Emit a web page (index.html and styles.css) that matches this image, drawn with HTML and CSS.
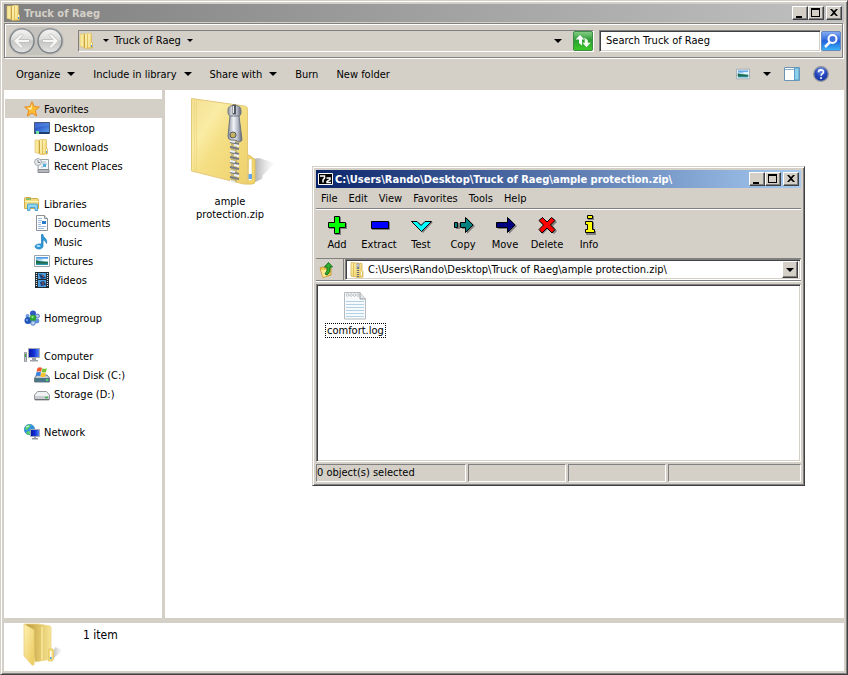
FILE: index.html
```html
<!DOCTYPE html>
<html lang="en">
<head>
<meta charset="utf-8">
<title>Truck of Raeg</title>
<link rel="stylesheet" href="styles.css">
</head>
<body>
<svg class="defs" aria-hidden="true">
  <defs>
    <linearGradient id="gFold" x1="0" x2="1" y1="0" y2="1"><stop offset="0" stop-color="#fdf2b4"/><stop offset="1" stop-color="#ecc95a"/></linearGradient>
    <linearGradient id="gFold2" x1="0" x2="1"><stop offset="0" stop-color="#b9973c"/><stop offset=".5" stop-color="#dcc062"/><stop offset="1" stop-color="#f7e493"/></linearGradient>
    <linearGradient id="gZip" x1="0" x2="1" y1="0" y2="1"><stop offset="0" stop-color="#f3e092"/><stop offset=".3" stop-color="#faeca4"/><stop offset=".5" stop-color="#f5df85"/><stop offset="1" stop-color="#eed06a"/></linearGradient>
    <linearGradient id="gSteel" x1="0" x2="1"><stop offset="0" stop-color="#8a8e96"/><stop offset=".4" stop-color="#f0f3f8"/><stop offset=".7" stop-color="#b4bac6"/><stop offset="1" stop-color="#5c6270"/></linearGradient>
    <linearGradient id="gShade" x1="0" x2="1"><stop offset="0" stop-color="#999" stop-opacity=".85"/><stop offset="1" stop-color="#ccc" stop-opacity="0"/></linearGradient>
    <linearGradient id="gBlue" x1="0" x2="1" y1="0" y2="1"><stop offset="0" stop-color="#1436b8"/><stop offset="1" stop-color="#5fa2ec"/></linearGradient>
    <linearGradient id="gScreen" x1="0" x2="1" y1="0" y2="0"><stop offset="0" stop-color="#0a14a0"/><stop offset=".5" stop-color="#1030d8"/><stop offset="1" stop-color="#5a8cf4"/></linearGradient>
    <linearGradient id="gGreen" x1="0" x2="0" y1="0" y2="1"><stop offset="0" stop-color="#88d088"/><stop offset=".45" stop-color="#2c9c34"/><stop offset="1" stop-color="#3ccc28"/></linearGradient>
    <linearGradient id="gFind" x1="0" x2="0" y1="0" y2="1"><stop offset="0" stop-color="#8ab0f4"/><stop offset=".5" stop-color="#2462dc"/><stop offset="1" stop-color="#38b8f8"/></linearGradient>
    <linearGradient id="gOrb" x1="0" x2="0" y1="0" y2="1"><stop offset="0" stop-color="#f2f2f0"/><stop offset=".5" stop-color="#c6c6c4"/><stop offset="1" stop-color="#e4e4e2"/></linearGradient>
    <linearGradient id="gPic" x1="0" x2="0" y1="0" y2="1"><stop offset="0" stop-color="#3d8fe0"/><stop offset=".5" stop-color="#d6f2fa"/><stop offset=".6" stop-color="#2c7c68"/><stop offset="1" stop-color="#2a9cb8"/></linearGradient>
    <radialGradient id="gHelp" cx=".5" cy=".25" r=".8"><stop offset="0" stop-color="#7c9cf0"/><stop offset=".5" stop-color="#2446bc"/><stop offset="1" stop-color="#1634a0"/></radialGradient>
  </defs>
  <symbol id="folder" viewBox="0 0 16 16">
    <path d="M1 1h4.500v13.500L1 13.500z" fill="#f8e99c" stroke="#dcbc5c" stroke-width=".6"/>
    <path d="M5 1.500L8 0h3.500l1 1v8l1 1v5l-7 .5L5 14.500z" fill="url(#gFold)" stroke="#d3ad47" stroke-width=".6"/>
    <path d="M5.500 1.500v13" stroke="#c9a23e"/>
    <path d="M8.500 1v14" stroke="#d9b752" stroke-width=".8"/>
    <path d="M7 1.500v13M10 1v13" stroke="#fff3b8"/>
    <path d="M12.500 10v4" stroke="#fff"/><path d="M12.500 12v2" stroke="#3b9be8"/>
  </symbol>
  <symbol id="zip" viewBox="0 0 16 16">
    <path d="M2 .5l11 1v7l1 1v5.500l-5 .5L2 14z" fill="url(#gFold)" stroke="#d3ad47" stroke-width=".7"/>
    <path d="M4.500 1v13" stroke="#dfbe59"/>
    <path d="M9 2v13" stroke="#656b75" stroke-width="2.400" stroke-dasharray="1 1"/>
    <path d="M9 1.500v5" stroke="#7e899c" stroke-width="2.400"/><path d="M9 2v3" stroke="#e8eef8"/>
    <path d="M12.500 9.500v4" stroke="#fff"/>
  </symbol>
  <symbol id="arrow" viewBox="0 0 8 4"><path d="M0 0h8L4 4z" fill="#000"/></symbol>
  <symbol id="pic" viewBox="0 0 16 16">
    <path d="M.5 2.500h15v11H.5z" fill="#fff" stroke="#98a4ae"/><path d="M2 4h12v8H2z" fill="url(#gPic)"/>
    <path d="M2 7l5 1.500 7 1v1H2z" fill="#1f6b50"/><path d="M8 6h6v2.500L9 8z" fill="#eafcff"/>
  </symbol>
  <symbol id="min" viewBox="0 0 12 10"><path d="M2 8h6v2H2z"/></symbol>
  <symbol id="max" viewBox="0 0 12 10"><path d="M1 0h9v9H1zM2 2v6h7V2z" fill-rule="evenodd"/></symbol>
  <symbol id="close" viewBox="0 0 12 10"><path d="M2 1h2l2 2 2-2h2L7 4.500 10 8H8L6 6 4 8H2l3-3.500z"/></symbol>
</svg>

<main class="window explorer">
  <header class="titlebar titlebar-idle">
    <svg class="i16"><use href="#folder"/></svg>
    <h1>Truck of Raeg</h1>
    <div class="captions">
      <button aria-label="Minimize"><svg><use href="#min"/></svg></button>
      <button aria-label="Maximize"><svg><use href="#max"/></svg></button>
      <button class="close" aria-label="Close"><svg><use href="#close"/></svg></button>
    </div>
  </header>

  <div class="navbar">
    <div class="orbs">
      <button aria-label="Back"><svg viewBox="0 0 28 28"><circle cx="14" cy="14" r="12" fill="url(#gOrb)" stroke="#80868a" stroke-width="1.500"/><path d="M3 13a11 11 0 0 1 22 0q-11 3-22 0z" fill="#fff" opacity=".3"/><path d="M13 6.500L5.500 14l7.500 7.500 2-2-4-4h10.500v-3H11l4-4z" fill="#f6f6f5" stroke="#b8b8b6" stroke-width=".8"/></svg></button>
      <button aria-label="Forward"><svg viewBox="0 0 28 28"><circle cx="14" cy="14" r="12" fill="url(#gOrb)" stroke="#80868a" stroke-width="1.500"/><path d="M3 13a11 11 0 0 1 22 0q-11 3-22 0z" fill="#fff" opacity=".3"/><path d="M15 6.500l7.500 7.500-7.500 7.500-2-2 4-4H6.500v-3H17l-4-4z" fill="#f6f6f5" stroke="#b8b8b6" stroke-width=".8"/></svg></button>
    </div>
    <div class="crumbs">
      <svg class="i16"><use href="#folder"/></svg>
      <button class="crumb-root" aria-label="Locations"><svg class="arr-s"><use href="#arrow"/></svg></button>
      <button class="crumb">Truck of Raeg <svg class="arr-s"><use href="#arrow"/></svg></button>
      <button class="history" aria-label="Previous locations"><svg class="arr"><use href="#arrow"/></svg></button>
      <button class="go" aria-label="Refresh"><svg viewBox="0 0 20 20"><rect x=".5" y=".5" width="19" height="19" rx="1.500" fill="url(#gGreen)" stroke="#3c8c44"/><path d="M7 4L2.500 8.500H6V12l3 2.500V8.500h2.500z" fill="#fff"/><path d="M13.500 16.500l4.500-5h-3V9l-4.500-3 1 2.500v3H9z" fill="#f4fff0" stroke="#2f9a34" stroke-width=".4"/></svg></button>
    </div>
    <input class="search" type="search" aria-label="Search" placeholder="Search Truck of Raeg">
    <button class="find" aria-label="Start search"><svg viewBox="0 0 20 20"><rect x=".5" y=".5" width="19" height="19" rx="1.500" fill="url(#gFind)" stroke="#6888c0"/><path d="M9 11l-5 5" stroke="#fff" stroke-width="2.500"/><circle cx="11.500" cy="8" r="4" fill="#3f72dc" stroke="#fff" stroke-width="2"/></svg></button>
  </div>

  <div class="commands">
    <button>Organize <svg class="arr"><use href="#arrow"/></svg></button>
    <button>Include in library <svg class="arr"><use href="#arrow"/></svg></button>
    <button>Share with <svg class="arr"><use href="#arrow"/></svg></button>
    <button>Burn</button>
    <button>New folder</button>
    <div class="views">
      <button aria-label="Change view"><svg class="i14"><use href="#pic"/></svg></button>
      <button aria-label="View options"><svg class="arr"><use href="#arrow"/></svg></button>
      <button aria-label="Preview pane"><svg class="i16" viewBox="0 0 16 16"><path d="M.5 1.500h15v13H.5z" fill="#fff" stroke="#6c94b4"/><path d="M1 3.500h9" stroke="#8cb0cc"/><path d="M10.500 2h4.500v12h-4.500z" fill="#8cd0ec" stroke="#5c9cc4"/></svg></button>
      <button aria-label="Help"><svg class="i16" viewBox="0 0 16 16"><circle cx="8" cy="8" r="7.300" fill="url(#gHelp)" stroke="#90949c" stroke-width="1.300"/><path d="M5.500 6.200c0-3.200 5-3 5-.3 0 1.800-2.400 1.700-2.400 3.800" fill="none" stroke="#fff" stroke-width="1.600"/><circle cx="8" cy="12" r="1" fill="#fff"/></svg></button>
    </div>
  </div>

  <div class="body">
    <nav class="tree">
      <section>
        <a class="root selected" href="#"><svg class="i16" viewBox="0 0 16 16"><path d="M8 .7l2.100 4.900 5.300.4-4.100 3.500 1.400 5.500L8 12l-4.700 3 1.400-5.500L.6 6l5.300-.4z" fill="#fdbd35" stroke="#e98b22"/><path d="M8 3L6.500 6.500 3 7l3 2 2-1z" fill="#ffe69a"/></svg>Favorites</a>
        <a href="#"><svg class="i16" viewBox="0 0 16 16"><path d="M.5 2.500h15v11H.5z" fill="url(#gBlue)" stroke="#45597c"/><path d="M1 12h14v2H1z" fill="#1d3c70"/><path d="M1 3h14v2l-14 3z" fill="#6e9ff0" opacity=".4"/><path d="M2 11h3v3H2z" fill="#72e0a0"/></svg>Desktop</a>
        <a href="#"><svg class="i16"><use href="#folder"/></svg>Downloads</a>
        <a href="#"><svg class="i16" viewBox="0 0 16 16"><path d="M4 1.500h10.500v10H4z" fill="#f2f6f8" stroke="#9aa0a4"/><path d="M7 4h5M8 6h5M7 9h2" stroke="#a0b8c8"/><path d="M9 6h3v3H9z" fill="#50b0d8"/><path d="M4 11.500h11v3H4z" fill="#b4b8bc" stroke="#888c90"/><circle cx="4" cy="4" r="3.400" fill="#e9eef2" stroke="#a0a6aa"/><path d="M4 2v2.500h2" stroke="#666" fill="none" stroke-width=".8"/></svg>Recent Places</a>
      </section>
      <section>
        <a class="root" href="#"><svg class="i16" viewBox="0 0 16 16"><path d="M.5 2.500q0-1 1-1h5l1 1h6l1 1v9H.5z" fill="#f2dc82" stroke="#d2ab4c"/><path d="M2 3h5" stroke="#63b45c" stroke-width="1.500"/><path d="M1 5.500h14" stroke="#fff2b8"/><path d="M3.500 14.500V9q0-1 1-1h8q1 0 1 1v5.500h-2.500v-3H6v3z" fill="#90d4f0" stroke="#4ca4d0"/></svg>Libraries</a>
        <a href="#"><svg class="i16" viewBox="0 0 16 16"><path d="M2.500.5h8l3 3v12h-11z" fill="#fff" stroke="#8c9298"/><path d="M10.500.5v3h3" fill="#dce2e8" stroke="#8c9298"/><path d="M4 3.500h4M4 5.500h4M4 7.500h3M4 9.500h3M4 11.500h8M4 13.500h6" stroke="#9dbbdc"/><path d="M8 6h4v3H8z" fill="#267ac8"/></svg>Documents</a>
        <a href="#"><svg class="i16" viewBox="0 0 16 16"><path d="M7.500.5H9c0 3.500 5 4 3.500 9C12 7 9.500 6 9 6v6c0 2-2 3-4 3s-4-1-4-2.500S4 9.500 7.500 10z" fill="#2f9bd8" stroke="#1c74b4" stroke-width=".7"/><ellipse cx="4.500" cy="12" rx="2" ry="1" fill="#a8e2ff"/></svg>Music</a>
        <a href="#"><svg class="i16"><use href="#pic"/></svg>Pictures</a>
        <a href="#"><svg class="i16" viewBox="0 0 16 16"><path d="M1 0h14v16H1z" fill="#202830"/><path d="M4 1h8v6H4zM4 8h8v7H4z" fill="#4c9cdc"/><path d="M5 2l4 1 3 3-5 1zM6 10l4-1 2 4-5 1z" fill="#1b3f78"/><path d="M8 3l2 2M9 10v3" stroke="#b05840"/><path d="M2.500 1v14M13.500 1v14" stroke="#dce8f0" stroke-width="1.200" stroke-dasharray="1 1"/></svg>Videos</a>
      </section>
      <section>
        <a class="root" href="#"><svg class="i16" viewBox="0 0 16 16"><circle cx="3.500" cy="6" r="2" fill="#6c9ce0"/><circle cx="4" cy="10.500" r="3.500" fill="#2456b8"/><circle cx="9" cy="3.500" r="3" fill="#3458c4"/><circle cx="13.500" cy="6" r="2" fill="#b4c8f0" stroke="#4468b8" stroke-width=".8"/><circle cx="13" cy="11" r="2.400" fill="#5c90dc"/><circle cx="9" cy="8" r="3.200" fill="#2da432"/><circle cx="8.500" cy="7" r="1.200" fill="#8ce47c"/><circle cx="9" cy="13" r="2.300" fill="#b4d0f4" stroke="#3c68b4" stroke-width=".8"/><circle cx="3" cy="10" r="1" fill="#84b0f4"/></svg>Homegroup</a>
      </section>
      <section>
        <a class="root" href="#"><svg class="i16" viewBox="0 0 16 16"><path d="M4.500.5h11v9h-11z" fill="url(#gScreen)" stroke="#a4aab4"/><path d="M8 10h4v2h2v1.500H6V12h2z" fill="#9ca2a8"/><path d="M.5 4.500h2v9h-2z" fill="#c8ccd0" stroke="#94989c"/><path d="M1.500 6v3" stroke="#38a838"/></svg>Computer</a>
        <a href="#"><svg class="i16" viewBox="0 0 16 16"><path d="M3 8h10l2.500 3v4H.5v-4z" fill="#c4ccd2" stroke="#707a82"/><path d="M1 11h14v4H1z" fill="#4b7688"/><path d="M12 13h2" stroke="#58f060" stroke-width="1.500"/><path d="M3.500 1q2.500-1.500 4.500 0L7 4.700q-2-1-4.500 0z" fill="#f0582c"/><path d="M8.500 1.300q2 1 4.500 0L12 5q-2.500 1-4.500 0z" fill="#78c038"/><path d="M2.500 5.300q2-1 4.500 0L6 9q-2-1-4.500 0z" fill="#3a80e0"/><path d="M7.500 5.500q2 1 4.300.2L11 9.500q-2.500 1-4.500 0z" fill="#fcc32c"/></svg>Local Disk (C:)</a>
        <a href="#"><svg class="i16" viewBox="0 0 16 16"><path d="M3.500 5.500h9l3 3.500v4q0 1-1 1h-13q-1 0-1-1V9z" fill="#f0f1f2" stroke="#94989c"/><path d="M1 10h14v3H1z" fill="#c9ccd0"/><path d="M1 13.500h14" stroke="#6c7074"/><path d="M11 11.500h3" stroke="#38b848" stroke-width="1.500"/></svg>Storage (D:)</a>
      </section>
      <section>
        <a class="root" href="#"><svg class="i16" viewBox="0 0 16 16"><circle cx="5.500" cy="5.500" r="5.200" fill="#3294e0" stroke="#2478b8" stroke-width=".6"/><path d="M2 2q3-2 5-1L5 4 3 6 1 5zM4 7l3 1-2 3-3-2z" fill="#5cd460"/><path d="M2 3l3-1" stroke="#d8ffff"/><path d="M6.500 5.500h9v7h-9z" fill="url(#gScreen)" stroke="#a4aab4"/><path d="M10 13h2v1h2v1.500H8V14h2z" fill="#9498a0"/></svg>Network</a>
      </section>
    </nav>

    <section class="files">
      <a class="tile" href="#">
        <svg viewBox="0 0 90 90">
          <path d="M62 85l9-4 1-4 12-12-16-5-6 1z" fill="url(#gShade)"/>
          <path d="M54 58l4-1 4 3q2 1 2 3v20q0 3-3 3h-7z" fill="#f3d76c" stroke="#e0bf5c"/>
          <path d="M57.500 61h3.500v21l-3.500 1z" fill="#fff" stroke="#d5b95c" stroke-width=".5"/><path d="M57.500 76h3.500v5h-3.500z" fill="#65a7e9"/>
          <path d="M.5.500l53 7.500q3 .5 3 3v73q-1 2.500-4 2L.5 73z" fill="url(#gZip)" stroke="#e4c97a"/>
          <path d="M3.500 2v71M5.500 2v72" stroke="#ead27c" stroke-width=".6"/>
          <path d="M43 42v42" stroke="#c8b878" stroke-width="6"/>
          <path d="M39 44l9 2M39 49l9 2M39 54l9 2M39 59l9 2M39 64l9 2M39 69l9 2M39 74l9 2M39 79l9 2" stroke="#777c82" stroke-width="2.200"/>
          <path d="M39 43l5 1M43 47l5 1M39 53l5 1M43 57l5 1M39 63l5 1M43 67l5 1M39 73l5 1M43 77l5 1M39 83l5 1" stroke="#edf1f5" stroke-width="2"/>
          <path d="M37 12q0-4 5-4.500h3q5 .5 5 5v3q-1 4-6.500 4T37 15z" fill="url(#gSteel)" stroke="#777d86"/>
          <path d="M41.500 6.500h3.500v10h-3.500z" fill="#50565f"/><path d="M42.500 8v7" stroke="#eef0f4"/>
          <path d="M39 18h9l3 24q-1 2-3 2-4-3-8-2-3-.5-3-4z" fill="url(#gSteel)" stroke="#6c7480"/>
          <circle cx="42" cy="37" r="3" fill="#c7b25e" stroke="#515967"/>
        </svg>
        <span>ample protection.zip</span>
      </a>
    </section>
  </div>

  <footer class="details">
    <svg viewBox="0 0 40 46">
      <path d="M28 38l4-4 8-7-8-3z" fill="url(#gShade)"/>
      <path d="M2 1h13l12 2 1 2v31l-16 3z" fill="url(#gFold2)" stroke="#ecd688" stroke-width=".8"/>
      <path d="M19 4v33" stroke="#f4e090" stroke-width="2"/>
      <path d="M25.500 26h4q1 0 1 1.500V36q0 2-2 2h-3z" fill="#f4da74" stroke="#e4c868" stroke-width=".8"/>
      <path d="M27 28h1.500v8H27z" fill="#fff"/><path d="M27 34h1.500v2H27z" fill="#4398ea"/>
      <path d="M1 1l10 6v35L9 42 1 33z" fill="url(#gFold)" stroke="#ead07c" stroke-width=".8"/>
    </svg>
    <span>1 item</span>
  </footer>
</main>

<section class="window archive" aria-label="Archive window">
  <header class="titlebar">
    <svg class="i16" viewBox="0 0 16 16"><path d="M.5 2.500h14v11H.5z" fill="#000" stroke="#fff"/><path d="M2 5h4.500v2L5 9v2.500M8.500 7H12v1.500l-3 2v1h4" fill="none" stroke="#fff" stroke-width="1.500"/></svg>
    <h2>C:\Users\Rando\Desktop\Truck of Raeg\ample protection.zip\</h2>
    <div class="captions">
      <button aria-label="Minimize"><svg><use href="#min"/></svg></button>
      <button aria-label="Maximize"><svg><use href="#max"/></svg></button>
      <button class="close" aria-label="Close"><svg><use href="#close"/></svg></button>
    </div>
  </header>
  <div class="menu">
    <button>File</button><button>Edit</button><button>View</button><button>Favorites</button><button>Tools</button><button>Help</button>
  </div>
  <div class="tools">
    <button><svg viewBox="0 0 24 24"><path d="M10 4h6v6h6v6h-6v6h-6v-6H4v-6h6z" fill="#808080"/><path d="M9.500 3.500h5v6h6v5h-6v6h-5v-6h-6v-5h6z" fill="#0f0" stroke="#000"/></svg>Add</button>
    <button><svg viewBox="0 0 24 24"><path d="M5 9h18v8H5z" fill="#808080"/><path d="M4.500 8.500h17v7h-17z" fill="#00f" stroke="#000"/></svg>Extract</button>
    <button><svg viewBox="0 0 24 24"><path d="M3 9h6l4 3 4-3h7L14 20z" fill="#808080"/><path d="M2.500 8.500H8l4 4 4-4h6.500L12.500 18.500z" fill="#0ff" stroke="#000"/></svg>Test</button>
    <button><svg viewBox="0 0 24 24"><path d="M11 10h5V5l8 8-8 8v-5h-5zM5 10h4v6H5z" fill="#808080"/><path d="M3.500 9.500h3v5h-3zM9.500 9.500h5v-5l7.500 7.500-7.500 7.500v-5h-5z" fill="#008080" stroke="#000"/></svg>Copy</button>
    <button><svg viewBox="0 0 24 24"><path d="M5 10h11V5l8 8-8 8v-5H5z" fill="#808080"/><path d="M3.500 9.500h11v-5l7.500 7.500-7.500 7.500v-5h-11z" fill="#000080" stroke="#000"/></svg>Move</button>
    <button><svg viewBox="0 0 24 24"><path d="M8 5l5 4 5-4 4 4-4 4 4 5-3 3-6-5-5 5-3-3 4-5-4-4z" fill="#808080"/><path d="M7.500 4.500l4.500 4.500 4.500-4.500 3.500 3-4.500 4.500 4.500 4.500-3 3.500-5-5-5 5-3-3.500 4.500-4.500L4 7.500z" fill="#f00" stroke="#000"/></svg>Delete</button>
    <button><svg viewBox="0 0 24 24"><path d="M11 3h6v4h-6zM9 9h8v9h2v4H9v-4h2v-6H9z" fill="#808080"/><path d="M10.500 2.500h5v3h-5zM8.500 8.500h7v8h2v3h-9v-3h2v-5h-2z" fill="#ff0" stroke="#000"/></svg>Info</button>
  </div>
  <div class="address">
    <button class="up" aria-label="Up one level"><svg class="i16" viewBox="0 0 16 16"><path d="M1 6l3-1 2 1h6v7l-8 2.500z" fill="#f2cb55" stroke="#c89a34"/><path d="M2 8h8l-2 6-4 1z" fill="#fbe694"/><path d="M8 13q4-3 3-8H13.500L9.500.5 5.500 5H8q1 4-2 7z" fill="#30b030" stroke="#167016"/></svg></button>
    <div class="combo">
      <svg class="i16"><use href="#zip"/></svg>
      <select aria-label="Path"><option>C:\Users\Rando\Desktop\Truck of Raeg\ample protection.zip\</option></select>
      <button aria-label="Show paths"><svg class="arr"><use href="#arrow"/></svg></button>
    </div>
  </div>
  <div class="list">
    <a href="#">
      <svg viewBox="0 0 24 28"><path d="M1.500.5H17L22.500 7v20h-21z" fill="#f6fafc" stroke="#b4babd"/><path d="M17 .5V7h5.500" fill="#e2e6e8" stroke="#9a9fa2"/><path d="M3 9.500h18M3 12.500h18M3 15.500h18M3 18.500h18M3 21.500h18M3 24.500h18" stroke="#b4d2e6"/><g fill="#fff" stroke="#a8acae" stroke-width=".7"><circle cx="4.500" cy="3" r="1.300"/><circle cx="8" cy="3" r="1.300"/><circle cx="11.500" cy="3" r="1.300"/><circle cx="15" cy="3" r="1.300"/></g></svg>
      <span>comfort.log</span>
    </a>
  </div>
  <footer class="status"><span>0 object(s) selected</span><span></span><span></span><span></span></footer>
</section>
</body>
</html>
```
FILE: styles.css
```css
* { box-sizing: border-box; }

:root {
  --face: #d4d0c8;
  --shadow: #808080;
  --dark: #404040;
}

body {
  margin: 0;
  min-height: 100vh;
  display: grid;
  background: var(--face);
  color: #000;
  font: 11px/13px "DejaVu Sans Condensed", "Liberation Sans", sans-serif;
}

button, input, select { font: inherit; color: inherit; }
button { margin: 0; padding: 0; border: 0; background: none; white-space: nowrap; }
a { color: inherit; text-decoration: none; }
svg { display: block; flex: none; }

.defs { position: absolute; width: 0; height: 0; }
.i16 { width: 16px; height: 16px; }
.i14 { width: 14px; height: 14px; }
.arr { width: 8px; height: 4px; }
.arr-s { width: 6px; height: 3px; }

/* Window frame and caption */
.window {
  display: flex;
  flex-direction: column;
  padding: 2px;
  background: var(--face);
  border: 1px solid;
  border-color: var(--face) var(--dark) var(--dark) var(--face);
  box-shadow: inset 1px 1px #fff, inset -1px -1px var(--shadow);
}
.explorer { padding: 3px; }

.titlebar {
  display: flex;
  align-items: center;
  height: 18px;
  padding: 0 2px;
  gap: 1px;
  color: #fff;
  background: linear-gradient(90deg, #0a246a, #a6caf0);
}
.titlebar-idle {
  gap: 2px;
  color: var(--face);
  background: linear-gradient(90deg, #808080, #c0c0c0);
}
.titlebar h1, .titlebar h2 {
  flex: 1;
  margin: 0;
  font-size: 11px;
  font-weight: bold;
  white-space: nowrap;
}
.captions { display: flex; }
.captions button {
  width: 16px;
  height: 14px;
  padding: 1px;
  background: var(--face);
  border: 1px solid;
  border-color: #fff var(--dark) var(--dark) #fff;
  box-shadow: inset -1px -1px var(--shadow);
}
.captions .close { margin-left: 2px; }
.captions svg { width: 12px; height: 10px; }

/* Explorer address row */
.navbar {
  display: flex;
  align-items: center;
  height: 35px;
  margin: 1px 1px 0 0;
  padding-left: 3px;
  border: 1px solid var(--shadow);
  box-shadow: 1px 1px #fff, inset 1px 1px #fff;
}
.orbs {
  display: flex;
  margin-right: 14px;
  border-radius: 14px;
  background: #c4c2bd;
}
.orbs svg { width: 28px; height: 28px; }
.crumbs {
  flex: 1;
  display: flex;
  align-items: center;
  height: 22px;
  border: 1px solid;
  border-color: var(--shadow) #fff #fff var(--shadow);
}
.crumb-root { margin: 0 5px 0 8px; }
.crumb { display: flex; align-items: center; gap: 6px; }
.history { margin: 0 11px 0 auto; }
.go svg, .find svg { width: 20px; height: 20px; }
.search {
  width: 222px;
  height: 22px;
  margin: 0 0 0 5px;
  padding: 0 6px;
  background: #fff;
  border: 1px solid;
  border-color: var(--shadow) #fff #fff var(--shadow);
  box-shadow: inset 1px 1px var(--dark), inset -1px -1px var(--face);
  outline: 0;
  appearance: none;
}
.search::placeholder { color: #000; opacity: 1; }
.find { margin-right: 1px; }

/* Explorer command row */
.commands {
  display: flex;
  align-items: center;
  gap: 18px;
  height: 32px;
  padding: 0 15px 0 12px;
}
.commands > button { display: flex; align-items: center; gap: 7px; }
.views { display: flex; align-items: center; gap: 13px; margin-left: auto; }

.body { flex: 1; display: flex; gap: 3px; }
.tree { width: 158px; padding: 9px 0 0 1px; background: #fff; }
.tree section { margin-bottom: 19px; }
.tree a {
  display: flex;
  align-items: center;
  gap: 4px;
  height: 19px;
  padding: 1px 0 0 29px;
}
.tree .root { padding-left: 19px; }
.tree .selected { background: var(--face); }

.files { flex: 1; padding: 8px 20px; background: #fff; }
.tile { display: flex; flex-direction: column; align-items: center; gap: 7px; width: 90px; text-align: center; }
.tile svg { width: 90px; height: 90px; margin-left: 12px; }
.tile span { width: 76px; }

.details {
  display: flex;
  gap: 20px;
  height: 48px;
  margin-top: 5px;
  padding-left: 19px;
  background: #fff;
  font-size: 12px;
  line-height: 24px;
}
.details svg { width: 40px; height: 46px; }

/* Archive manager window, floating over the explorer */
.archive {
  position: absolute;
  left: 312px;
  top: 166px;
  width: 493px;
  padding: 3px;
}
.menu {
  display: flex;
  gap: 11px;
  height: 21px;
  padding: 0 5px;
  border-bottom: 1px solid var(--shadow);
}
.tools {
  display: flex;
  height: 49px;
  padding-top: 3px;
  border-top: 1px solid #fff;
}
.tools button { width: 42px; display: flex; flex-direction: column; align-items: center; gap: 1px; }
.tools svg { width: 24px; height: 24px; }
.address {
  display: flex;
  height: 23px;
  border: solid var(--shadow);
  border-width: 1px 0;
  box-shadow: 0 1px #fff;
}
.up { width: 28px; padding: 2px 3px; border-right: 1px solid var(--shadow); }
.combo {
  flex: 1;
  display: flex;
  align-items: center;
  min-width: 0;
  height: 21px;
  margin-left: 1px;
  padding: 2px 2px 2px 3px;
  background: #fff;
  border: 1px solid;
  border-color: var(--shadow) #fff #fff var(--shadow);
  box-shadow: inset 1px 1px var(--dark), inset -1px -1px var(--face);
}
.combo select {
  flex: 1;
  min-width: 0;
  padding: 0 3px;
  border: 0;
  background: #fff;
  appearance: none;
}
.combo button {
  display: grid;
  place-items: center;
  width: 16px;
  height: 17px;
  background: var(--face);
  border: 1px solid;
  border-color: #fff var(--dark) var(--dark) #fff;
  box-shadow: inset -1px -1px var(--shadow);
}
.list {
  height: 178px;
  margin-top: 3px;
  padding: 7px 8px;
  background: #fff;
  border: 1px solid;
  border-color: var(--shadow) #fff #fff var(--shadow);
  box-shadow: inset 1px 1px var(--dark), inset -1px -1px var(--face);
}
.list a { display: inline-flex; flex-direction: column; align-items: center; gap: 3px; }
.list svg { width: 24px; height: 28px; }
.list span { padding: 0 1px; border: 1px dotted #000; }
.status {
  display: grid;
  grid-template-columns: 150px 98px 98px 1fr;
  gap: 2px;
  margin-top: 2px;
}
.status span {
  height: 18px;
  line-height: 16px;
  border: 1px solid;
  border-color: var(--shadow) #fff #fff var(--shadow);
}
```
